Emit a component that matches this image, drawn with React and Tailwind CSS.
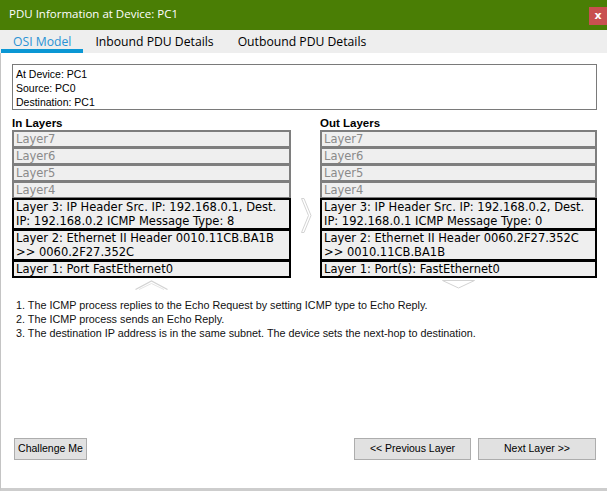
import React from "react";

const inLayers = [
  "Layer 3: IP Header Src. IP: 192.168.0.1, Dest. IP: 192.168.0.2 ICMP Message Type: 8",
  "Layer 2: Ethernet II Header 0010.11CB.BA1B >> 0060.2F27.352C",
  "Layer 1: Port FastEthernet0",
];

const outLayers = [
  "Layer 3: IP Header Src. IP: 192.168.0.2, Dest. IP: 192.168.0.1 ICMP Message Type: 0",
  "Layer 2: Ethernet II Header 0060.2F27.352C >> 0010.11CB.BA1B",
  "Layer 1: Port(s): FastEthernet0",
];

const steps = [
  "1. The ICMP process replies to the Echo Request by setting ICMP type to Echo Reply.",
  "2. The ICMP process sends an Echo Reply.",
  "3. The destination IP address is in the same subnet. The device sets the next-hop to destination.",
];

export default function App() {
  return (
    <div className="w-[607px] h-[491px] flex flex-col bg-white overflow-hidden font-['Liberation_Sans',Arial,sans-serif]">
      {/* Title bar */}
      <div className="h-[30px] shrink-0 bg-[#4a7e05] flex justify-between">
        <span className="pl-[9px] pt-[6px] text-[11.5px] leading-[16px] text-white font-['Open_Sans',sans-serif]">
          PDU Information at Device: PC1
        </span>
        <button
          type="button"
          className="mt-[7px] w-[18px] h-[18px] bg-[#c85050] text-white text-[11px] font-bold leading-[16px] flex items-center justify-center font-['DejaVu_Sans',sans-serif]"
        >
          x
        </button>
      </div>

      {/* Tabs */}
      <div className="h-[23px] shrink-0 bg-[#eeeeee] flex pl-[1px] font-['Open_Sans',sans-serif] text-[12.2px]">
        <Tab label="OSI Model" active />
        <Tab label="Inbound PDU Details" />
        <Tab label="Outbound PDU Details" />
      </div>

      {/* Body */}
      <div className="flex-1 flex flex-col border-l border-[#c4c4c4] border-b-[3px] border-b-[#cdcdcd] pl-[11px] pr-[10px]">
        {/* Device info */}
        <div className="mt-[11px] h-[46px] border border-[#7a7a7a] px-[3px] pt-[2px] text-[10.5px] leading-[14px] text-black">
          <div>At Device: PC1</div>
          <div>Source: PC0</div>
          <div>Destination: PC1</div>
        </div>

        {/* Layer columns */}
        <div className="flex mt-[6px]">
          <LayerColumn title="In Layers" rows={inLayers} width="w-[279px]" arrow="up" />

          <div className="w-[29px] pt-[82px] pl-[10px]">
            <svg width="11" height="35" viewBox="0 0 11 35" fill="none">
              <polygon
                points="0.5,0.5 3,0.5 10,17.5 3,34.5 0.5,34.5 7.5,17.5"
                fill="#ffffff"
                stroke="#d3d3d3"
                strokeWidth="1"
                strokeLinejoin="round"
              />
            </svg>
          </div>

          <LayerColumn title="Out Layers" rows={outLayers} width="w-[277px]" arrow="down" />
        </div>

        {/* Steps */}
        <div className="mt-[8px] pl-[4px] text-[10.8px] leading-[14px] text-[#111]">
          {steps.map((s) => (
            <div key={s}>{s}</div>
          ))}
        </div>

        <div className="flex-1" />

        {/* Buttons */}
        <div className="flex items-center mb-[28px] pl-[2px] pr-px">
          <Btn label="Challenge Me" width="w-[73px]" />
          <div className="flex-1" />
          <Btn label="<< Previous Layer" width="w-[117px]" />
          <div className="w-[7px]" />
          <Btn label="Next Layer >>" width="w-[118px]" />
        </div>
      </div>
    </div>
  );
}

function Tab({ label, active }) {
  return (
    <div className="relative px-[12px] pt-[4px] leading-[16px]">
      <span className={active ? "text-[#2a92d4]" : "text-black"}>{label}</span>
      {active ? (
        <div className="absolute left-0 right-0 bottom-0 h-[4px] bg-[#0b97d4]" />
      ) : null}
    </div>
  );
}

function LayerColumn({ title, rows, width, arrow }) {
  return (
    <div className={`${width} flex flex-col`}>
      <div className="h-[14px] text-[11.5px] leading-[14px] font-bold text-black">
        {title}
      </div>

      <div className="flex flex-col font-['DejaVu_Sans',Verdana,sans-serif] text-[11.5px]">
        {["Layer7", "Layer6", "Layer5", "Layer4"].map((l, i) => (
          <div
            key={l}
            className={`h-[18px] border-2 border-[#7e7e7e] bg-[#efefef] text-[#8a8a8a] pl-[2px] leading-[14px] ${
              i === 0 ? "" : "-mt-px"
            }`}
          >
            {l}
          </div>
        ))}
        {rows.map((r) => (
          <div
            key={r}
            className="-mt-px border-2 border-black bg-[#efefef] text-black pl-[2px] pr-[2px] leading-[14px]"
          >
            {r}
          </div>
        ))}
      </div>

      <div className="flex justify-center pt-[2px]">
        {arrow === "up" ? (
          <svg width="33" height="10" viewBox="0 0 33 10" fill="none">
            <polyline
              points="0.5,9.5 16.5,1 32.5,9.5"
              stroke="#d3d3d3"
              strokeWidth="1.2"
              fill="none"
            />
            <polyline
              points="4,9.5 16.5,3.5 29,9.5"
              stroke="#e4e4e4"
              strokeWidth="1"
              fill="none"
            />
          </svg>
        ) : (
          <svg width="33" height="9" viewBox="0 0 33 9" fill="none">
            <polygon
              points="0.5,0.5 32.5,0.5 16.5,8"
              stroke="#d3d3d3"
              strokeWidth="1"
              fill="#ffffff"
            />
          </svg>
        )}
      </div>
    </div>
  );
}

function Btn({ label, width }) {
  return (
    <button
      type="button"
      className={`${width} h-[22px] bg-[#e1e1e1] border border-[#adadad] text-[10.5px] text-black`}
    >
      {label}
    </button>
  );
}
